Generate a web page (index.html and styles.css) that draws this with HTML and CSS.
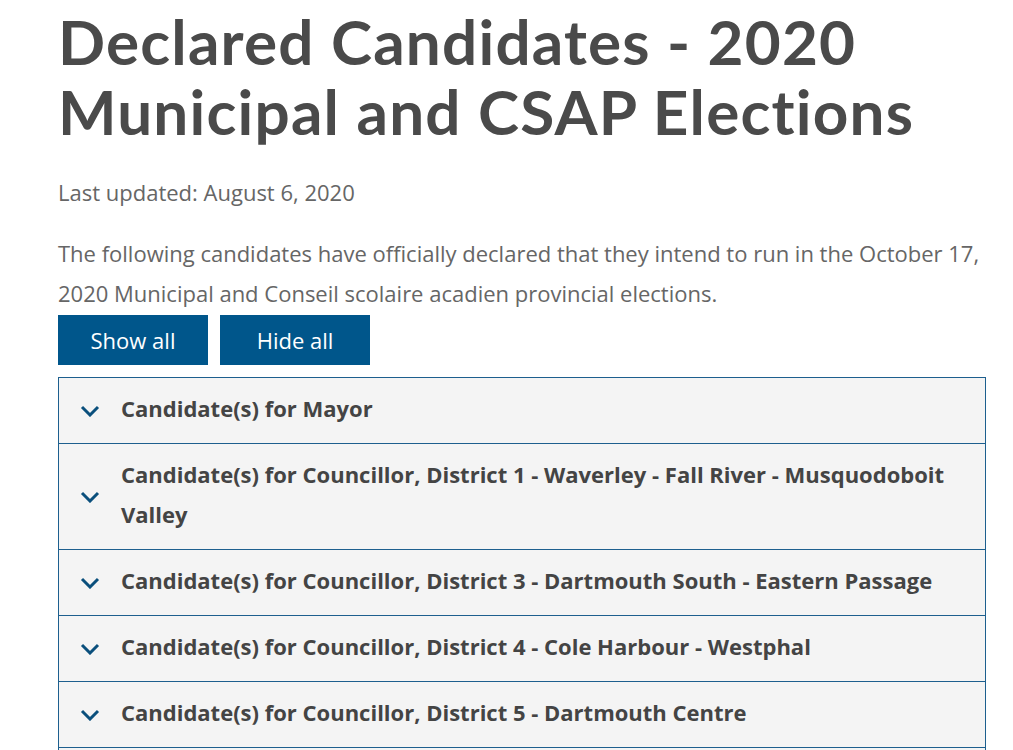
FILE: index.html
```html
<!DOCTYPE html>
<html lang="en">
<head>
<meta charset="utf-8">
<title>Declared Candidates - 2020 Municipal and CSAP Elections</title>
<link rel="stylesheet" href="styles.css">
</head>
<body>
<main class="page">
  <h1 class="title">Declared Candidates - 2020 Municipal and CSAP Elections</h1>
  <p class="updated">Last updated: August 6, 2020</p>
  <p class="intro">The following candidates have officially declared that they intend to run in the October 17, 2020 Municipal and Conseil scolaire acadien provincial elections.</p>
  <div class="controls">
    <button class="btn">Show all</button>
    <button class="btn">Hide all</button>
  </div>
  <div class="accordion">
    <div class="item"><svg class="chev" viewBox="0 0 20 12" width="20" height="12"><path d="M2 2 L10 10 L18 2" fill="none" stroke="currentColor" stroke-width="3"/></svg><span class="label">Candidate(s) for Mayor</span></div>
    <div class="item"><svg class="chev" viewBox="0 0 20 12" width="20" height="12"><path d="M2 2 L10 10 L18 2" fill="none" stroke="currentColor" stroke-width="3"/></svg><span class="label">Candidate(s) for Councillor, District 1 - Waverley - Fall River - Musquodoboit Valley</span></div>
    <div class="item"><svg class="chev" viewBox="0 0 20 12" width="20" height="12"><path d="M2 2 L10 10 L18 2" fill="none" stroke="currentColor" stroke-width="3"/></svg><span class="label">Candidate(s) for Councillor, District 3 - Dartmouth South - Eastern Passage</span></div>
    <div class="item"><svg class="chev" viewBox="0 0 20 12" width="20" height="12"><path d="M2 2 L10 10 L18 2" fill="none" stroke="currentColor" stroke-width="3"/></svg><span class="label">Candidate(s) for Councillor, District 4 - Cole Harbour - Westphal</span></div>
    <div class="item"><svg class="chev" viewBox="0 0 20 12" width="20" height="12"><path d="M2 2 L10 10 L18 2" fill="none" stroke="currentColor" stroke-width="3"/></svg><span class="label">Candidate(s) for Councillor, District 5 - Dartmouth Centre</span></div>
    <div class="item"><svg class="chev" viewBox="0 0 20 12" width="20" height="12"><path d="M2 2 L10 10 L18 2" fill="none" stroke="currentColor" stroke-width="3"/></svg><span class="label">Candidate(s) for Councillor, District 6 - Harbourview - Burnside - Dartmouth East</span></div>
  </div>
</main>
</body>
</html>
```
FILE: styles.css
```css
html, body {
  margin: 0;
  padding: 0;
  background: #ffffff;
}
body {
  font-family: "Open Sans", sans-serif;
  color: #666666;
}
.page {
  padding: 0 27px 0 58px;
  width: 928px;
}
.title {
  margin: 6px 0 0 0;
  font-family: "Lato", sans-serif;
  font-weight: 700;
  font-size: 62px;
  line-height: 70px;
  color: #4a4a4a;
  letter-spacing: 1.2px;
}
.updated {
  margin: 26px 0 0 0;
  font-size: 22px;
  line-height: 40px;
  color: #666666;
}
.intro {
  margin: 21px 0 0 0;
  font-size: 22px;
  line-height: 40px;
  color: #666666;
}
.controls {
  display: flex;
  gap: 12px;
  margin-top: 2px;
}
.btn {
  width: 150px;
  height: 50px;
  border: 0;
  background: #00568b;
  color: #ffffff;
  font-family: "Open Sans", sans-serif;
  font-size: 22px;
  padding: 0;
}
.accordion {
  margin-top: 12px;
  border: 1px solid #1d5f8e;
  border-bottom: 0;
}
.item {
  display: flex;
  align-items: center;
  background: #f4f4f4;
  border-bottom: 1px solid #1d5f8e;
  padding: 10px 20px 15px 21px;
}
.chev {
  flex: none;
  color: #0a4f7c;
  margin-right: 21px;
  margin-top: 5px;
}
.label {
  font-family: "Open Sans", sans-serif;
  font-weight: 700;
  font-size: 22px;
  line-height: 40px;
  color: #444444;
}
```
